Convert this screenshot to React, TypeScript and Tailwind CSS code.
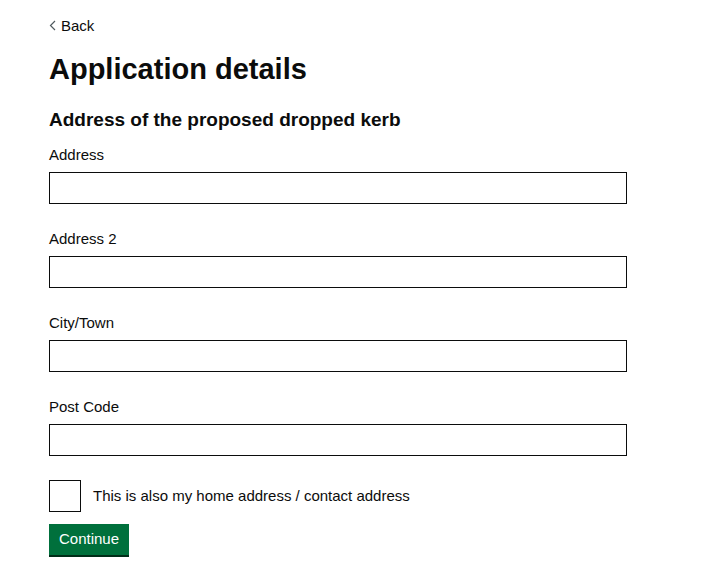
export default function App() {
  const fields = ["Address", "Address 2", "City/Town", "Post Code"];
  return (
    <div className="min-h-screen bg-white pl-[49px] pt-[16px] text-[#0b0c0c] [font-family:'Liberation_Sans',Arial,sans-serif]">
      <a href="#" className="flex h-[20px] items-center gap-[5px] text-[15px] text-[#0b0c0c]">
        <svg width="7" height="11" viewBox="0 0 7 11" className="mt-[-2px]">
          <path d="M6 1 L1.5 5.5 L6 10" fill="none" stroke="#505a5f" strokeWidth="1.2" />
        </svg>
        Back
      </a>
      <h1 className="mt-[13px] text-[29px] font-bold leading-[40px]">Application details</h1>
      <h2 className="mt-[18px] text-[19px] font-bold leading-[25px]">Address of the proposed dropped kerb</h2>
      <div className="mt-[13px] flex flex-col gap-[25px]">
        {fields.map((f) => (
          <div key={f}>
            <label className="block text-[15px] leading-[20px]">{f}</label>
            <input className="mt-[7px] block h-[32px] w-[578px] border border-[#0b0c0c] px-2 text-[15px] outline-none" />
          </div>
        ))}
      </div>
      <div className="mt-[24px] flex items-center gap-[12px]">
        <div className="h-[32px] w-[32px] border border-[#0b0c0c]" />
        <span className="text-[15px]">This is also my home address / contact address</span>
      </div>
      <button className="mt-[12px] h-[31px] bg-[#00703c] px-[10px] text-[15px] text-white shadow-[0_2px_0_#002d18]">
        Continue
      </button>
    </div>
  );
}
